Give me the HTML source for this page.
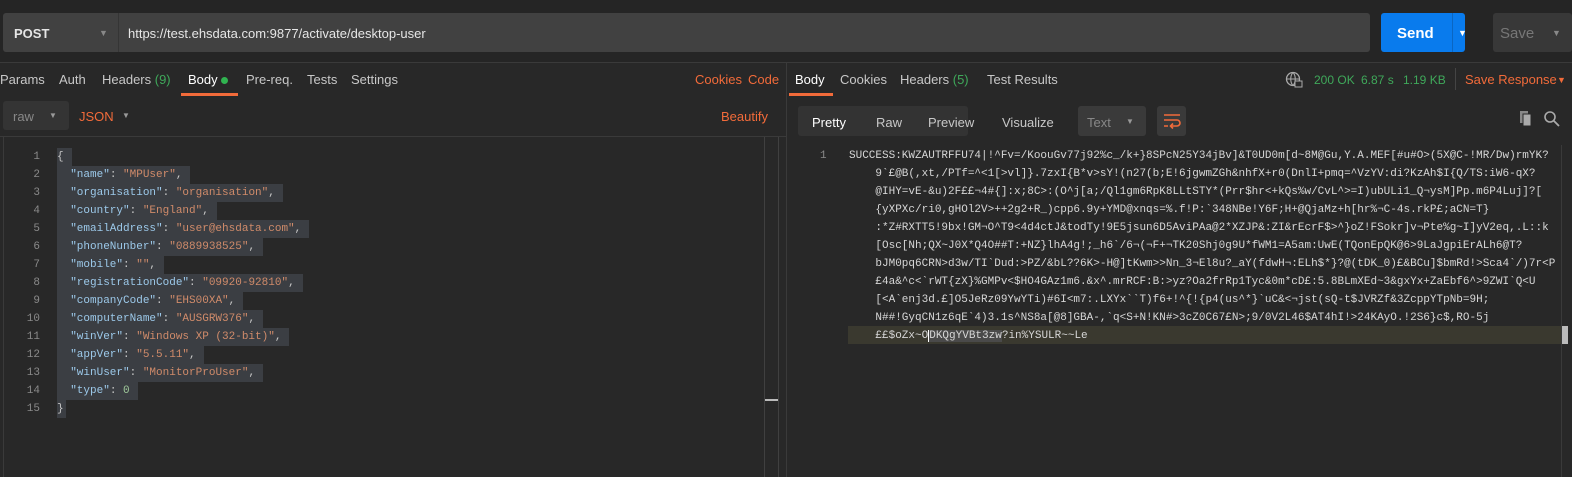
<!DOCTYPE html>
<html><head><meta charset="utf-8"><style>
*{margin:0;padding:0;box-sizing:border-box}
body{width:1572px;height:477px;background:#282828;font-family:"Liberation Sans",sans-serif;font-size:13px;color:#c8c8c8;position:relative;overflow:hidden}
.a{position:absolute}
.top{left:0;top:0;width:1572px;height:63px;background:#252525;border-bottom:1px solid #3a3a3a}
.mono{font-family:"Liberation Mono",monospace;font-size:11px;line-height:18px;white-space:pre}
.k{color:#9cc9ea}.s{color:#d08b6a}.n{color:#9fc99a}
.sel{background:#3b3e43;padding-right:8px;display:inline-block;height:18px;vertical-align:top}
.or{color:#f26b3a}.g{color:#3fa85a}
</style></head><body>
<div class="a top"></div>
<div class="a" style="left:3px;top:13px;width:1367px;height:39px;background:#414141;border-radius:3px"></div>
<div class="a" style="left:118px;top:13px;width:1px;height:39px;background:#353535"></div>
<div class="a" style="left:14px;top:26px;font-weight:bold;color:#e6e6e6">POST</div>
<div class="a" style="left:99px;top:28px;font-size:9px;color:#888">▼</div>
<div class="a" style="left:128px;top:26px;color:#e6e6e6">https://test.ehsdata.com:9877/activate/desktop-user</div>
<div class="a" style="left:1381px;top:13px;width:84px;height:39px;background:#097bed;border-radius:3px"></div>
<div class="a" style="left:1452px;top:13px;width:1px;height:39px;background:#0a66c2"></div>
<div class="a" style="left:1397px;top:25px;font-size:15px;font-weight:bold;color:#fff">Send</div>
<div class="a" style="left:1458px;top:28px;font-size:9px;color:#fff">▼</div>
<div class="a" style="left:1493px;top:13px;width:79px;height:39px;background:#383838;border-radius:3px"></div>
<div class="a" style="left:1500px;top:25px;font-size:15px;color:#777">Save</div>
<div class="a" style="left:1552px;top:28px;font-size:9px;color:#888">▼</div>

<!-- left tabs -->
<div class="a" style="left:0;top:72px;width:780px">
<span class="a" style="left:0">Params</span><span class="a" style="left:59px">Auth</span><span class="a" style="left:102px">Headers <span class="g">(9)</span></span><span class="a" style="left:188px;color:#fff">Body <span style="display:inline-block;width:7px;height:7px;border-radius:50%;background:#30b350"></span></span><span class="a" style="left:246px">Pre-req.</span><span class="a" style="left:307px">Tests</span><span class="a" style="left:351px">Settings</span>
<span class="a or" style="left:695px">Cookies</span><span class="a or" style="left:748px">Code</span></div>
<div class="a" style="left:181px;top:93px;width:57px;height:3px;background:#f26b3a"></div>
<div class="a" style="left:3px;top:101px;width:66px;height:29px;background:#343434;border-radius:3px"></div>
<div class="a" style="left:13px;top:109px;color:#888">raw</div>
<div class="a" style="left:49px;top:111px;font-size:8px;color:#999">▼</div>
<div class="a or" style="left:79px;top:109px">JSON</div>
<div class="a" style="left:122px;top:111px;font-size:8px;color:#999">▼</div>
<div class="a or" style="left:721px;top:109px">Beautify</div>
<div class="a" style="left:0;top:136px;width:786px;height:1px;background:#3a3a3a"></div>
<div class="a" style="left:3px;top:137px;width:1px;height:340px;background:#3a3a3a"></div>
<div class="a" style="left:764px;top:137px;width:1px;height:340px;background:#404040"></div>
<div class="a" style="left:778px;top:137px;width:1px;height:340px;background:#404040"></div>
<div class="a" style="left:765px;top:399px;width:13px;height:2px;background:#bbb"></div>

<div class="a mono" style="left:20px;top:148px;width:20px;text-align:right;color:#8a8a8a">1
2
3
4
5
6
7
8
9
10
11
12
13
14
15</div>
<div class="a mono" style="left:57px;top:148px;color:#c8c8c8"><span class="sel">{</span>
<span class="sel">  <span class="k">"name"</span>: <span class="s">"MPUser"</span>,</span>
<span class="sel">  <span class="k">"organisation"</span>: <span class="s">"organisation"</span>,</span>
<span class="sel">  <span class="k">"country"</span>: <span class="s">"England"</span>,</span>
<span class="sel">  <span class="k">"emailAddress"</span>: <span class="s">"user@ehsdata.com"</span>,</span>
<span class="sel">  <span class="k">"phoneNunber"</span>: <span class="s">"0889938525"</span>,</span>
<span class="sel">  <span class="k">"mobile"</span>: <span class="s">""</span>,</span>
<span class="sel">  <span class="k">"registrationCode"</span>: <span class="s">"09920-92810"</span>,</span>
<span class="sel">  <span class="k">"companyCode"</span>: <span class="s">"EHS00XA"</span>,</span>
<span class="sel">  <span class="k">"computerName"</span>: <span class="s">"AUSGRW376"</span>,</span>
<span class="sel">  <span class="k">"winVer"</span>: <span class="s">"Windows XP (32-bit)"</span>,</span>
<span class="sel">  <span class="k">"appVer"</span>: <span class="s">"5.5.11"</span>,</span>
<span class="sel">  <span class="k">"winUser"</span>: <span class="s">"MonitorProUser"</span>,</span>
<span class="sel">  <span class="k">"type"</span>: <span class="n">0</span></span>
<span class="sel" style="padding-right:2px">}</span></div>

<!-- right -->
<div class="a" style="left:786px;top:63px;width:1px;height:414px;background:#3a3a3a"></div>
<div class="a" style="left:795px;top:72px;color:#fff">Body</div>
<div class="a" style="left:840px;top:72px">Cookies</div>
<div class="a" style="left:900px;top:72px">Headers <span class="g">(5)</span></div>
<div class="a" style="left:987px;top:72px">Test Results</div>
<div class="a" style="left:789px;top:93px;width:44px;height:3px;background:#f26b3a"></div>
<svg class="a" style="left:1285px;top:71px" width="18" height="18" viewBox="0 0 18 18"><circle cx="8" cy="8" r="6.5" fill="none" stroke="#aaa" stroke-width="1.3"/><path d="M1.5 8h13M8 1.5c-3 3-3 10 0 13M8 1.5c3 3 3 10 0 13" fill="none" stroke="#aaa" stroke-width="1.1"/><rect x="10" y="10" width="7" height="6" fill="#282828" stroke="#aaa"/></svg>
<div class="a g" style="left:1314px;top:73px;font-size:12px">200 OK</div>
<div class="a g" style="left:1361px;top:73px;font-size:12px">6.87 s</div>
<div class="a g" style="left:1403px;top:73px;font-size:12px">1.19 KB</div>
<div class="a" style="left:1455px;top:68px;width:1px;height:22px;background:#444"></div>
<div class="a or" style="left:1465px;top:72px">Save Response</div>
<div class="a or" style="left:1557px;top:75px;font-size:9px">▼</div>

<div class="a" style="left:798px;top:106px;width:170px;height:30px;background:#333;border-radius:3px"></div>
<div class="a" style="left:812px;top:115px;color:#fff">Pretty</div>
<div class="a" style="left:876px;top:115px">Raw</div>
<div class="a" style="left:928px;top:115px">Preview</div>
<div class="a" style="left:1002px;top:115px">Visualize</div>
<div class="a" style="left:1078px;top:106px;width:68px;height:30px;background:#3a3a3a;border-radius:3px"></div>
<div class="a" style="left:1087px;top:115px;color:#888">Text</div>
<div class="a" style="left:1126px;top:117px;font-size:8px;color:#999">▼</div>
<div class="a" style="left:1157px;top:106px;width:29px;height:30px;background:#3a3a3a;border-radius:3px"></div>
<svg class="a" style="left:1162px;top:112px" width="20" height="18" viewBox="0 0 20 18"><path d="M2 3h16M2 8h13a3 3 0 0 1 0 6H9M2 14h4" fill="none" stroke="#f26b3a" stroke-width="1.6"/><path d="M11 11.5l-2.5 2.5 2.5 2.5" fill="none" stroke="#f26b3a" stroke-width="1.6"/></svg>
<svg class="a" style="left:1518px;top:110px" width="16" height="18" viewBox="0 0 16 18"><rect x="2" y="1" width="8" height="12" fill="#888"/><rect x="5" y="4" width="8" height="12" fill="#aaa" stroke="#282828"/></svg>
<svg class="a" style="left:1543px;top:110px" width="18" height="18" viewBox="0 0 18 18"><circle cx="7" cy="7" r="5" fill="none" stroke="#aaa" stroke-width="1.6"/><path d="M11 11l5 5" stroke="#aaa" stroke-width="1.8"/></svg>

<div class="a" style="left:1561px;top:145px;width:1px;height:332px;background:#3a3a3a"></div>
<div class="a" style="left:848px;top:326px;width:713px;height:18px;background:#3a392f"></div>
<div class="a" style="left:1562px;top:326px;width:6px;height:18px;background:#bbb"></div>
<div class="a mono" style="left:820px;top:147px;color:#8a8a8a">1</div>
<div class="a mono" style="left:849px;top:147px;color:#d6d6d6">SUCCESS:KWZAUTRFFU74|!^Fv=/KoouGv77j92%c_/k+}8SPcN25Y34jBv]&amp;T0UD0m[d~8M@Gu,Y.A.MEF[#u#O&gt;(5X@C-!MR/Dw)rmYK?
    9`£@B(,xt,/PTf=^&lt;1[&gt;vl]}.7zxI{B*v&gt;sY!(n27(b;E!6jgwmZGh&amp;nhfX+r0(DnlI+pmq=^VzYV:di?KzAh$I{Q/TS:iW6-qX?
    @IHY=vE-&amp;u)2F££¬4#{]:x;8C&gt;:(O^j[a;/Ql1gm6RpK8LLtSTY*(Prr$hr&lt;+kQs%w/CvL^&gt;=I)ubULi1_Q¬ysM]Pp.m6P4Luj]?[
    {yXPXc/ri0,gHOl2V&gt;++2g2+R_)cpp6.9y+YMD@xnqs=%.f!P:`348NBe!Y6F;H+@QjaMz+h[hr%¬C-4s.rkP£;aCN=T}
    :*Z#RXTT5!9bx!GM¬O^T9&lt;4d4ctJ&amp;todTy!9E5jsun6D5AviPAa@2*XZJP&amp;:ZI&amp;rEcrF$&gt;^}oZ!FSokr]v¬Pte%g~I]yV2eq,.L::k
    [Osc[Nh;QX~J0X*Q4O##T:+NZ}lhA4g!;_h6`/6¬(¬F+¬TK20Shj0g9U*fWM1=A5am:UwE(TQonEpQK@6&gt;9LaJgpiErALh6@T?
    bJM0pq6CRN&gt;d3w/TI`Dud:&gt;PZ/&amp;bL??6K&gt;-H@]tKwm&gt;&gt;Nn_3¬El8u?_aY(fdwH¬:ELh$*}?@(tDK_0)£&amp;BCu]$bmRd!&gt;Sca4`/)7r&lt;P
    £4a&amp;^c&lt;`rWT{zX}%GMPv&lt;$HO4GAz1m6.&amp;x^.mrRCF:B:&gt;yz?Oa2frRp1Tyc&amp;0m*cD£:5.8BLmXEd~3&amp;gxYx+ZaEbf6^&gt;9ZWI`Q&lt;U
    [&lt;A`enj3d.£]O5JeRz09YwYTi)#6I&lt;m7:.LXYx``T)f6+!^{!{p4(us^*}`uC&amp;&lt;¬jst(sQ-t$JVRZf&amp;3ZcppYTpNb=9H;
    N##!GyqCN1z6qE`4)3.1s^NS8a[@8]GBA-,`q&lt;S+N!KN#&gt;3cZ0C67£N&gt;;9/0V2L46$AT4hI!&gt;24KAyO.!2S6}c$,RO-5j
    ££$oZx~O<span style="background:#4a4a4a;border-left:1px solid #fff">DKQgYVBt3zw</span>?in%YSULR~~Le</div>
</body></html>
